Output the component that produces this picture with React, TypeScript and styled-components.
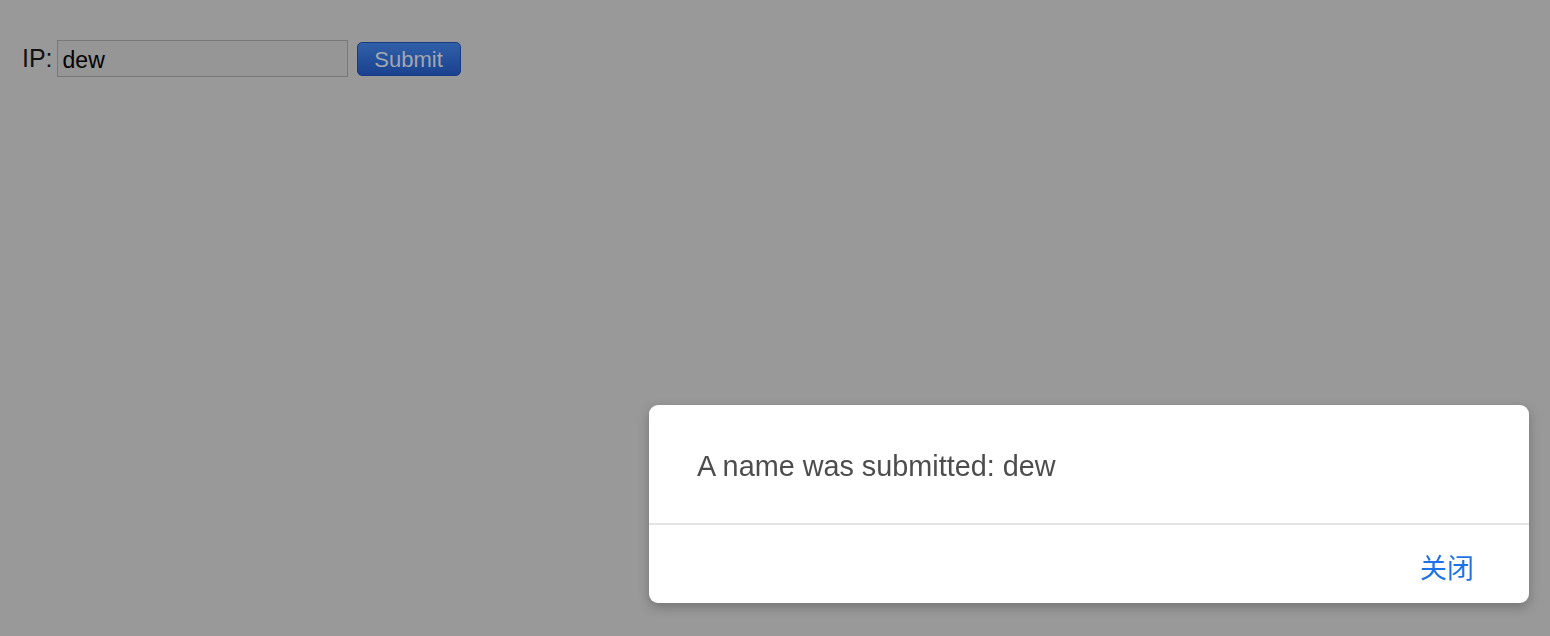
import React from "react";
import styled, { createGlobalStyle } from "styled-components";

const Global = createGlobalStyle`
  html, body { margin: 0; padding: 0; }
  body {
    background: #999999;
    font-family: "Liberation Sans", Arial, sans-serif;
    width: 1550px;
    height: 636px;
    overflow: hidden;
  }
`;

const Page = styled.div`
  padding: 40px 0 0 22px;
`;

const Form = styled.form`
  display: flex;
  align-items: center;
`;

const Label = styled.label`
  font-size: 25px;
  color: #111;
  margin-right: 4px;
  line-height: 37px;
`;

const Input = styled.input`
  box-sizing: border-box;
  width: 291px;
  height: 37px;
  background: #969696;
  border: 1px solid #787878;
  padding: 4px 5px 0;
  font-family: "Liberation Sans", Arial, sans-serif;
  font-size: 23px;
  color: #000;
  outline: none;
  margin: 0 9px 0 0;
`;

const SubmitButton = styled.button`
  box-sizing: border-box;
  width: 104px;
  height: 34px;
  border-radius: 5px;
  border: 1px solid #1a3a82;
  background: linear-gradient(#3060a8, #1a418f);
  color: #a2a7b0;
  font-family: "Liberation Sans", Arial, sans-serif;
  font-size: 22px;
  padding: 3px 0 0;
  cursor: pointer;
`;

const Overlay = styled.div`
  position: fixed;
  inset: 0;
  display: flex;
  justify-content: flex-end;
  align-items: flex-end;
  padding: 0 21px 33px 0;
`;

const Dialog = styled.div`
  width: 880px;
  background: #fff;
  border-radius: 9px;
  box-shadow: 0 4px 12px rgba(0, 0, 0, 0.25);
  overflow: hidden;
`;

const Body = styled.div`
  box-sizing: border-box;
  height: 120px;
  padding: 5px 48px 0;
  display: flex;
  align-items: center;
  font-family: "Liberation Sans", Arial, sans-serif;
  font-size: 28.8px;
  color: #4d4d4d;
  border-bottom: 2px solid #e3e3e3;
`;

const Footer = styled.div`
  box-sizing: border-box;
  height: 78px;
  display: flex;
  justify-content: flex-end;
  align-items: center;
  padding: 4px 55px 0 0;
`;

const TextButton = styled.button`
  border: none;
  background: none;
  padding: 0;
  font-family: "Noto Sans CJK SC", sans-serif;
  font-size: 27px;
  color: #1d72ea;
  cursor: pointer;
`;

export default function App() {
  return (
    <>
      <Global />
      <Page>
        <Form onSubmit={(e) => e.preventDefault()}>
          <Label>IP:</Label>
          <Input defaultValue="dew" />
          <SubmitButton type="submit">Submit</SubmitButton>
        </Form>
      </Page>
      <Overlay>
        <Dialog>
          <Body>A name was submitted: dew</Body>
          <Footer>
            <TextButton>关闭</TextButton>
          </Footer>
        </Dialog>
      </Overlay>
    </>
  );
}
